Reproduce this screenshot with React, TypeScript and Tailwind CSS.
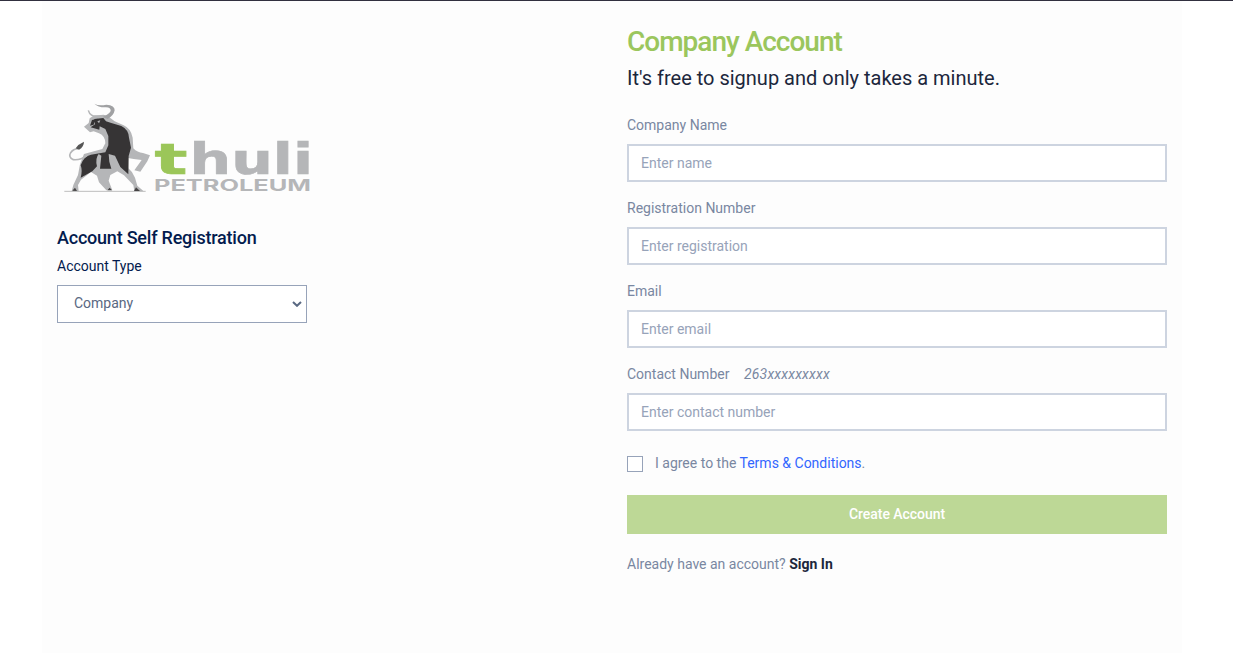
import React from "react";

function Bull() {
  return (
    <g transform="scale(0.33333)">
      <path d="M28 289H272" stroke="#b0b0b0" strokeWidth="2.5" />
      <path d="M87 95L101 84L104 70L118 61L138 60Q152 56 163 67L179 79L206 91Q228 101 233 128L235 160Q247 173 264 174L285 181L277 199L256 230L238 226L260 195L236 192L219 189L220 220Q234 231 240 248L247 272L266 289H238L235 270L207 241L187 229L166 240L161 257L172 286H154L132 262L126 242L108 231L78 254L69 270L71 289H50L55 270L69 240L75 208L87 177L117 169L142 162L151 145Q151 123 132 115L116 109L105 112Z" fill="#b5b6b8" />
      <path d="M100 46Q105 66 132 65" fill="none" stroke="#b5b6b8" strokeWidth="4.5" />
      <path d="M118 26Q132 34 154 29Q180 31 179 46Q176 62 158 72L143 66Q163 57 167 48Q168 38 153 37Q130 38 118 26Z" fill="#a0a1a3" />
      <path d="M118 72L145 69L153 79L169 84L199 93Q221 104 222 128L228 158L221 183L220 238L196 216L180 182L161 177L163 200L169 221H135L139 182L131 177Q120 190 126 214L112 229L77 248Q83 227 77 211Q86 183 108 179L151 172L160 151V123L151 102L134 94L133 104L107 97L120 88Z" fill="#363435" />
      <path d="M119 82L128 71L111 75L105 92L116 89Z" fill="#363435" />
      <path d="M127 79L136 76L132 85Z" fill="#b5b6b8" />
      <path d="M96 181Q77 196 55 194Q39 187 47 173Q55 162 69 161" fill="none" stroke="#b5b6b8" strokeWidth="5" />
      <path d="M62 160L70 150L87 140Q87 155 72 164Z" fill="#555" />
      <path d="M52 287L60 278L66 288ZM157 286L164 278L171 286ZM237 288L243 277L255 288Z" fill="#454344" />
    </g>
  );
}

function Logo() {
  return (
    <svg className="block h-[105px] w-[260px]" viewBox="0 0 260 105" role="img" aria-label="Thuli Petroleum">
      <Bull />
      <g fontWeight="700" fill="#b5b6b8">
        <text x="99.5" y="79" fontFamily="DejaVu Sans" fontSize="43" fill="#9bc659" stroke="#9bc659" strokeWidth="0.6" textLength="33" lengthAdjust="spacingAndGlyphs">t</text>
        <text x="134.5" y="79" fontFamily="DejaVu Sans" fontSize="43" stroke="#b5b6b8" strokeWidth="0.6" textLength="123.5" lengthAdjust="spacingAndGlyphs">huli</text>
        <text x="99" y="96" fontFamily="Inter" fontSize="15.5" textLength="157" lengthAdjust="spacingAndGlyphs">PETROLEUM</text>
      </g>
    </svg>
  );
}

function Field({ label, placeholder, hint }: { label: string; placeholder: string; hint?: string }) {
  return (
    <label className="mb-4 block">
      <span className="mb-2 block leading-[21px]">
        {label}
        {hint && <em className="ml-[14.5px] tracking-[0.2px]">{hint}</em>}
      </span>
      <input
        className="block h-[38px] w-full border-2 border-[#cdd4e0] bg-white px-3 text-sm text-[#596882] outline-none placeholder:text-[#97a3b9]"
        placeholder={placeholder}
      />
    </label>
  );
}

export default function App() {
  return (
    <div className="h-[653px] overflow-hidden border-t border-[#31303f] bg-white font-[Roboto,sans-serif] text-sm text-[#7987a1]">
      <main className="ml-[42px] flex h-full w-[1140px] bg-[#fdfdfd]">
        <section className="w-[570px] pt-[94px] pl-[15px]">
          <div className="-ml-0.5">
            <Logo />
          </div>
          <h2 className="mt-[27px] text-lg leading-[22px] font-medium tracking-[-0.22px] text-[#031b4e]">Account Self Registration</h2>
          <p className="mt-[7px] leading-[21px] text-[#031b4e]">Account Type</p>
          <div className="mt-2 grid w-[250px]">
            <select className="col-start-1 row-start-1 h-[38px] w-full appearance-none border border-[#97a3b9] bg-white px-4 pb-[3px] text-sm text-[#596882] outline-none">
              <option>Company</option>
            </select>
            <svg className="pointer-events-none col-start-1 row-start-1 mr-[5px] h-[6px] w-[10px] self-center justify-self-end" viewBox="0 0 10 6">
              <path d="M1 1L5 4.8L9 1" fill="none" stroke="#596882" strokeWidth="2" />
            </svg>
          </div>
        </section>
        <section className="w-[570px] px-[15px] pt-6">
          <h1 className="text-[28px] leading-[34px] font-medium tracking-[-1px] text-[#9bc65d]">Company Account</h1>
          <h4 className="mt-[7px] mb-[25px] text-xl leading-6 text-[#1c273c]">It's free to signup and only takes a minute.</h4>
          <Field label="Company Name" placeholder="Enter name" />
          <Field label="Registration Number" placeholder="Enter registration" />
          <Field label="Email" placeholder="Enter email" />
          <Field label="Contact Number" placeholder="Enter contact number" hint="263xxxxxxxxx" />
          <label className="mt-[22px] flex h-[21px] items-center leading-[21px]">
            <input type="checkbox" className="mt-px mr-3 size-4 appearance-none border border-[#97a3b9] bg-white" />
            <span>
              I agree to the <a className="text-[#3366ff]">Terms &amp; Conditions</a>.
            </span>
          </label>
          <button className="mt-[21px] block h-[39px] w-full bg-[#bdd896] pb-0.5 font-medium tracking-[-0.05px] text-white">Create Account</button>
          <p className="mt-5 leading-[21px]">
            Already have an account? <a className="font-bold text-[#1c273c]">Sign In</a>
          </p>
        </section>
      </main>
    </div>
  );
}
